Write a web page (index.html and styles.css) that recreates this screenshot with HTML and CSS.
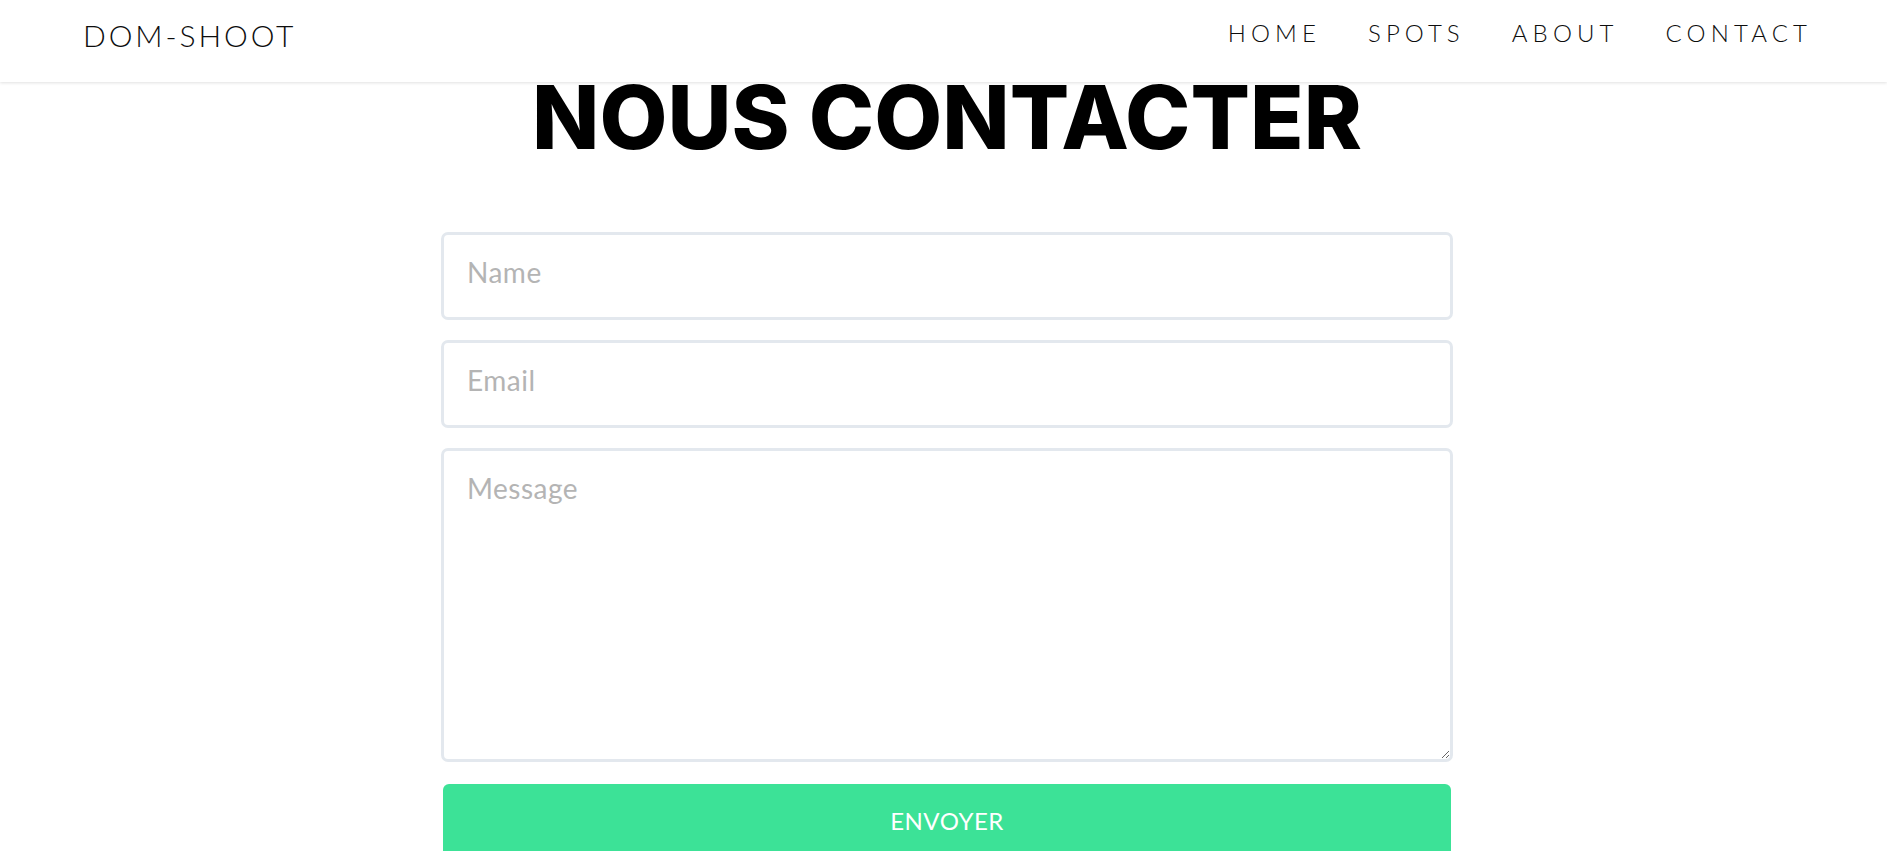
FILE: index.html
```html
<!DOCTYPE html>
<html lang="fr">
<head>
<meta charset="utf-8">
<title>Dom-Shoot - Contact</title>
<link rel="stylesheet" href="styles.css">
</head>
<body>
<header class="site-header">
  <div class="logo">DOM-SHOOT</div>
  <nav class="nav">
    <a class="nav-link" href="#">HOME</a>
    <a class="nav-link" href="#">SPOTS</a>
    <a class="nav-link" href="#">ABOUT</a>
    <a class="nav-link" href="#">CONTACT</a>
  </nav>
</header>
<main class="contact">
  <h1 class="title">NOUS CONTACTER</h1>
  <form class="form">
    <input class="field" type="text" placeholder="Name">
    <input class="field" type="email" placeholder="Email">
    <textarea class="field field-message" placeholder="Message"></textarea>
    <button class="submit" type="button">ENVOYER</button>
  </form>
</main>
</body>
</html>
```

FILE: styles.css
```css
* { box-sizing: border-box; }

html, body {
  margin: 0;
  padding: 0;
  background: #ffffff;
  overflow: hidden;
}

body {
  font-family: "Lato", "Open Sans", sans-serif;
  color: #111;
  height: 851px;
}

.site-header {
  position: relative;
  z-index: 2;
  height: 82px;
  display: flex;
  justify-content: space-between;
  align-items: flex-start;
  padding: 20px 75px 0 83px;
  background: #fff;
  box-shadow: 0 1px 3px rgba(0, 0, 0, 0.12);
}

.logo {
  font-size: 30px;
  line-height: 30px;
  font-weight: 300;
  letter-spacing: 2.9px;
  color: #0d0d0d;
}

.nav {
  display: flex;
  gap: 47px;
  padding-top: 1px;
}

.nav-link {
  font-size: 24px;
  line-height: 24px;
  font-weight: 300;
  letter-spacing: 5.1px;
  color: #0d0d0d;
  text-decoration: none;
}

.contact {
  display: flex;
  flex-direction: column;
  align-items: center;
  padding-left: 7px;
}

.title {
  margin: 0;
  font-family: "Inter", "Open Sans", sans-serif;
  font-weight: 800;
  font-size: 88px;
  line-height: 70px;
  color: #000;
  letter-spacing: 0;
}

.form {
  width: 1012px;
  margin-top: 80px;
  display: flex;
  flex-direction: column;
  gap: 20px;
}

.field {
  display: block;
  width: 100%;
  height: 88px;
  border: 3px solid #e3e8ee;
  border-radius: 7px;
  padding: 0 23px 8px;
  font-family: "Lato", "Open Sans", sans-serif;
  font-size: 28px;
  letter-spacing: 0.5px;
  color: #333;
  background: #fff;
  outline: none;
}

.field::placeholder {
  color: #b4b4b4;
  opacity: 1;
}

.field-message {
  height: 314px;
  padding: 20px 23px;
  resize: vertical;
}

.submit {
  margin: 2px 2px 0;
  height: 72px;
  border: none;
  border-radius: 6px;
  background: #3ce297;
  color: #fff;
  font-family: "Lato", "Open Sans", sans-serif;
  font-size: 24px;
  letter-spacing: 0.5px;
  font-weight: 400;
  cursor: pointer;
}
```
